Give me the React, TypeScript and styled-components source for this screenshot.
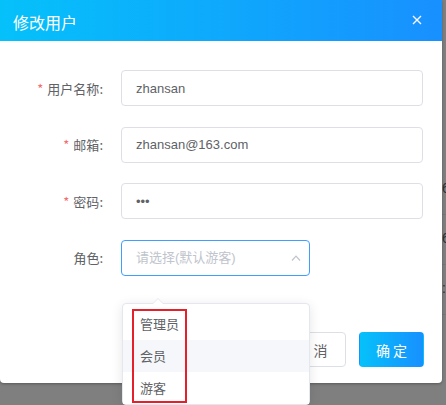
import React from 'react'
import styled, { createGlobalStyle } from 'styled-components'

const GlobalStyle = createGlobalStyle`
    html, body {
        margin: 0;
        padding: 0;
        background: #fff;
    }
    * {
        box-sizing: border-box;
    }
`

const Page = styled.div`
    position: relative;
    width: 446px;
    height: 405px;
    overflow: hidden;
    background: #fff;
    font-family: "Liberation Sans", "Noto Sans CJK SC", sans-serif;
`

const BgTable = styled.div`
    padding-top: 165px;
`

const BgRow = styled.div`
    height: 50px;
    padding-left: 442px;
    border-bottom: 1px solid #ebeef5;
    line-height: 46px;
    font-size: 14px;
    color: #606266;
    white-space: nowrap;
`

const Mask = styled.div`
    position: absolute;
    inset: 0;
    background: rgba(0, 0, 0, 0.5);
`

const Dialog = styled.div`
    position: absolute;
    left: 0;
    top: 0;
    width: 442px;
    height: 383px;
    background: #fff;
    border-radius: 0 0 4px 4px;
    box-shadow: 0 1px 3px rgba(0, 0, 0, 0.3);
    display: flex;
    flex-direction: column;
`

const Header = styled.div`
    height: 41px;
    flex-shrink: 0;
    display: flex;
    align-items: center;
    justify-content: space-between;
    padding: 2px 20px 0 13px;
    background: linear-gradient(to right, #05c1fa, #1890ff);
    color: #fff;
    font-size: 16px;
    font-family: "Noto Sans CJK SC", sans-serif;

    svg {
        display: block;
        margin-top: -4px;
    }
`

const Body = styled.div`
    padding: 29px 19px 0 0;
    display: flex;
    flex-direction: column;
    gap: 20.67px;
`

const FormItem = styled.div`
    display: flex;
    align-items: center;
    height: 36px;
`

const Label = styled.label`
    width: 121px;
    padding-right: 18px;
    text-align: right;
    font-size: 13px;
    color: #606266;
    font-family: "Noto Sans CJK SC", sans-serif;

    em {
        font-style: normal;
        color: #f56c6c;
        margin-right: 4px;
    }
`

const Input = styled.input<{ $width?: number; $focus?: boolean }>`
    width: ${p => p.$width ?? 302}px;
    height: 36px;
    border: 1px solid ${p => (p.$focus ? '#409eff' : '#dcdfe6')};
    border-radius: 4px;
    padding: 0 14px;
    font-size: 13px;
    font-family: "Liberation Sans", "Noto Sans CJK SC", sans-serif;
    color: #606266;
    outline: none;
    background: #fff;

    &::placeholder {
        color: #c0c4cc;
    }
`

const SelectBox = styled.div`
    position: relative;
    width: 189px;
    height: 36px;

    input {
        width: 100%;
        padding-right: 30px;
    }
`

const Caret = styled.svg`
    position: absolute;
    right: 9px;
    top: 15px;
`

const Dropdown = styled.div`
    position: absolute;
    left: 1px;
    top: calc(100% + 27px);
    width: 188px;
    z-index: 10;
    padding-top: 4px;
    background: #fff;
    border: 1px solid #e4e7ed;
    border-radius: 4px;
    box-shadow: 0 2px 12px rgba(0, 0, 0, 0.1);

    &::before {
        content: '';
        position: absolute;
        left: 29px;
        top: -6px;
        border-left: 6px solid transparent;
        border-right: 6px solid transparent;
        border-bottom: 6px solid #e4e7ed;
    }
    &::after {
        content: '';
        position: absolute;
        left: 30px;
        top: -5px;
        border-left: 5px solid transparent;
        border-right: 5px solid transparent;
        border-bottom: 5px solid #fff;
    }
`

const Option = styled.div<{ $hover?: boolean }>`
    height: 32px;
    line-height: 32px;
    padding: 0 17px;
    font-size: 13px;
    color: #606266;
    font-family: "Noto Sans CJK SC", sans-serif;
    background: ${p => (p.$hover ? '#f5f7fa' : '#fff')};
`

const Highlight = styled.div`
    position: absolute;
    left: 9px;
    top: 5px;
    width: 55px;
    height: 94px;
    border: 2px solid #e5202a;
    pointer-events: none;
`

const Footer = styled.div`
    margin-top: auto;
    display: flex;
    justify-content: flex-end;
    gap: 13px;
    padding: 0 18px 16px 0;
`

const Button = styled.button<{ $primary?: boolean }>`
    width: 65px;
    height: 35px;
    border-radius: 4px;
    font-size: 14px;
    letter-spacing: ${p => (p.$primary ? 3 : 5)}px;
    padding: 0 0 0 ${p => (p.$primary ? 3 : 0)}px;
    font-family: "Noto Sans CJK SC", sans-serif;
    border: 1px solid ${p => (p.$primary ? 'transparent' : '#dcdfe6')};
    background: ${p => (p.$primary ? 'linear-gradient(to right, #05c1fa, #1890ff)' : '#fff')};
    color: ${p => (p.$primary ? '#fff' : '#606266')};
`

const fields = [
    { label: '用户名称', value: 'zhansan', type: 'text' },
    { label: '邮箱', value: 'zhansan@163.com', type: 'text' },
    { label: '密码', value: '123', type: 'password' },
]

const roles = ['管理员', '会员', '游客']

const App = () => {
    return (
        <Page>
            <GlobalStyle />
            <BgTable>
                <BgRow>6</BgRow>
                <BgRow>6</BgRow>
                <BgRow>:</BgRow>
            </BgTable>
            <Mask />
            <Dialog>
                <Header>
                    <span>修改用户</span>
                    <svg width="10" height="10" viewBox="0 0 10 10">
                        <path d="M1 1 L9 9 M9 1 L1 9" stroke="#fff" strokeWidth="1.3" fill="none" />
                    </svg>
                </Header>
                <Body>
                    {fields.map(f => (
                        <FormItem key={f.label}>
                            <Label><em>*</em>{f.label}:</Label>
                            <Input type={f.type} value={f.value} readOnly />
                        </FormItem>
                    ))}
                    <FormItem>
                        <Label>角色:</Label>
                        <SelectBox>
                            <Input $focus placeholder="请选择(默认游客)" readOnly />
                            <Caret width="10" height="6" viewBox="0 0 10 6">
                                <path d="M1 5.5 L5 1.2 L9 5.5" stroke="#c0c4cc" strokeWidth="1.2" fill="none" />
                            </Caret>
                            <Dropdown>
                                {roles.map((r, i) => (
                                    <Option key={r} $hover={i === 1}>{r}</Option>
                                ))}
                                <Highlight />
                            </Dropdown>
                        </SelectBox>
                    </FormItem>
                </Body>
                <Footer>
                    <Button>取消</Button>
                    <Button $primary>确定</Button>
                </Footer>
            </Dialog>
        </Page>
    )
}

export default App
